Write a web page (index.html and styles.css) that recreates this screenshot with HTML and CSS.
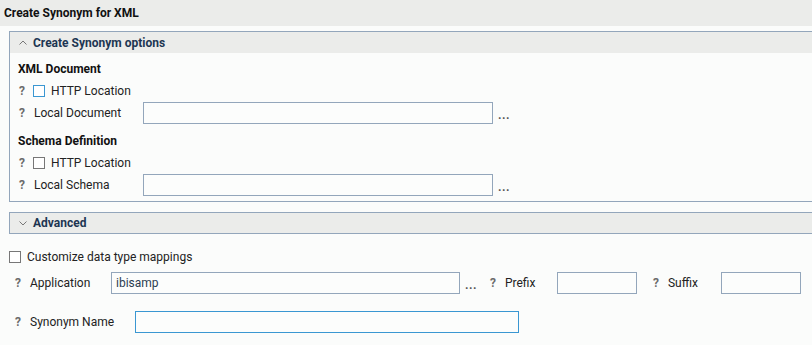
FILE: index.html
```html
<!DOCTYPE html>
<html lang="en">
<head>
	<meta charset="UTF-8">
	<title>Create Synonym for XML</title>
	<link rel="stylesheet" href="styles.css">
</head>
<body>
	<div class="titlebar">Create Synonym for XML</div>
	<div class="content">
		<div class="panel">
			<div class="panel-head">
				<svg class="chevron" width="8" height="6" viewBox="0 0 8 6"><path d="M0.5 4.5 L4 1 L7.5 4.5" fill="none" stroke="#777" stroke-width="1"/></svg>
				<span>Create Synonym options</span>
			</div>
			<div class="panel-body">
				<div class="group">XML Document</div>
				<div class="row">
					<span class="help">?</span>
					<span class="check focus"></span>
					<span class="check-label">HTTP Location</span>
				</div>
				<div class="row">
					<span class="help">?</span>
					<span class="label wide">Local Document</span>
					<input class="field long" type="text">
					<span class="more">...</span>
				</div>
				<div class="group second">Schema Definition</div>
				<div class="row">
					<span class="help">?</span>
					<span class="check"></span>
					<span class="check-label">HTTP Location</span>
				</div>
				<div class="row">
					<span class="help">?</span>
					<span class="label wide">Local Schema</span>
					<input class="field long" type="text">
					<span class="more">...</span>
				</div>
			</div>
		</div>

		<div class="panel adv">
			<div class="panel-head">
				<svg class="chevron" width="8" height="6" viewBox="0 0 8 6"><path d="M0.5 1.5 L4 5 L7.5 1.5" fill="none" stroke="#777" stroke-width="1"/></svg>
				<span>Advanced</span>
			</div>
		</div>

		<div class="adv-body">
			<div class="row custom">
				<span class="check"></span>
				<span class="check-label">Customize data type mappings</span>
			</div>
			<div class="row indent app-row">
				<span class="help">?</span>
				<span class="label app">Application</span>
				<input class="field app-field" type="text" value="ibisamp">
				<span class="more">...</span>
				<span class="help pre">?</span>
				<span class="label short">Prefix</span>
				<input class="field small" type="text">
				<span class="help suf">?</span>
				<span class="label suffix">Suffix</span>
				<input class="field small" type="text">
			</div>
			<div class="row indent syn">
				<span class="help">?</span>
				<span class="label name">Synonym Name</span>
				<input class="field name-field focus" type="text">
			</div>
		</div>
	</div>
</body>
</html>
```

FILE: styles.css
```css
body {
	margin: 0;
	background: #fbfcfb;
	font-family: Roboto, "Liberation Sans", sans-serif;
	font-size: 12px;
	color: #222;
	overflow: hidden;
}
.titlebar {
	height: 26px;
	line-height: 26px;
	padding-left: 4px;
	background: #ebecea;
	font-weight: bold;
	color: #111;
}
.content {
	padding: 5px 0 0 9px;
}
.panel {
	border: 1px solid #93a6bb;
	border-right: none;
}
.panel-head {
	display: flex;
	align-items: center;
	height: 21px;
	background: #ebecea;
	padding-left: 9px;
	font-weight: bold;
	color: #1d3652;
}
.adv .panel-head { height: 20px; }
.chevron { margin-right: 6px; }
.panel-body {
	padding: 5px 0 5px 8px;
}
.group {
	height: 22px;
	line-height: 22px;
	font-weight: bold;
	color: #111;
}
.group.second { margin-top: 6px; }
.row {
	display: flex;
	align-items: center;
	height: 22px;
}
.help {
	width: 15px;
	padding-left: 1px;
	box-sizing: border-box;
	font-weight: bold;
	color: #6b6b6b;
}
.check {
	width: 12px;
	height: 12px;
	box-sizing: border-box;
	border: 1px solid #777;
	background: #fff;
}
.check.focus { border-color: #3a97d2; }
.check-label { margin-left: 6px; }
.label { padding-left: 1px; box-sizing: border-box; }
.label.wide { width: 110px; }
.label.app { width: 82px; }
.label.name { width: 106px; }
.label.short { width: 53px; }
.label.suffix { width: 54px; }
.field {
	height: 22px;
	box-sizing: border-box;
	border: 1px solid #93a6bb;
	background: #fcfdfc;
	padding: 0 4px;
	font-family: Roboto, "Liberation Sans", sans-serif;
	font-size: 12px;
	color: #2c3d52;
	outline: none;
	margin: 0;
}
.field.focus { border-color: #3a97d2; }
.field.long { width: 350px; }
.field.app-field { width: 349px; }
.field.small { width: 80px; }
.field.name-field { width: 384px; }
.more {
	margin-left: 5px;
	margin-top: 4px;
	font-weight: bold;
	color: #555;
	letter-spacing: 0.5px;
}
.adv { margin-top: 10px; }
.custom { margin-top: 12px; }
.app-row { margin-top: 4px; }
.indent { padding-left: 5px; }
.help.pre { margin-left: 12px; }
.help.suf { margin-left: 15px; }
.syn { margin-top: 17px; }
```
